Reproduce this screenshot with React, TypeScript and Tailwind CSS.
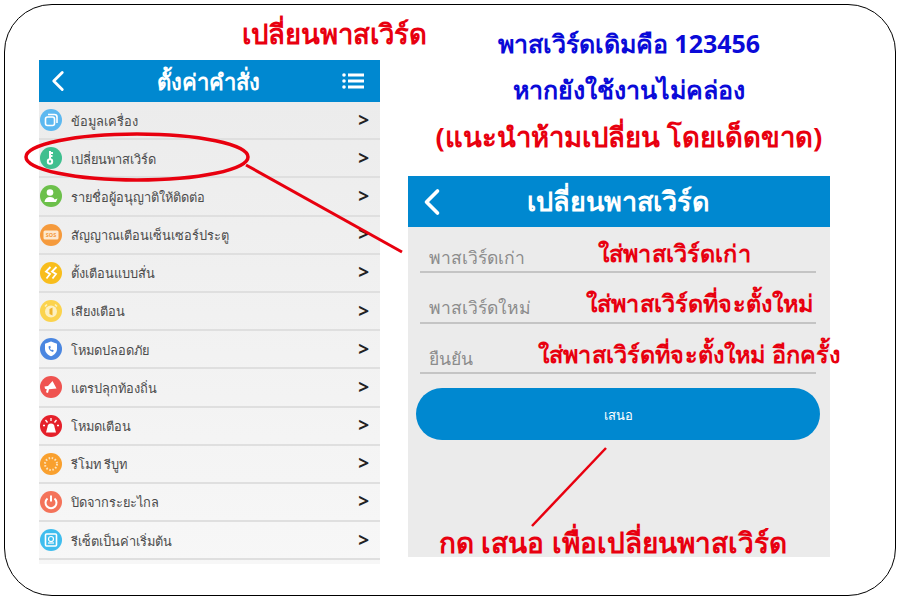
import { ChevronLeft } from 'lucide-react'

const MENU = [
  { label: 'ข้อมูลเครื่อง', color: 'bg-[#5cb8f0]', icon: 'copy' },
  { label: 'เปลี่ยนพาสเวิร์ด', color: 'bg-[#3fbf8f]', icon: 'key' },
  { label: 'รายชื่อผู้อนุญาติให้ติดต่อ', color: 'bg-[#6cc04a]', icon: 'user' },
  { label: 'สัญญาณเตือนเซ็นเซอร์ประตู', color: 'bg-[#f59a3c]', icon: 'sos' },
  { label: 'ตั้งเตือนแบบสั่น', color: 'bg-[#f8bd1c]', icon: 'vibrate' },
  { label: 'เสียงเตือน', color: 'bg-[#fbd34d]', icon: 'sound' },
  { label: 'โหมดปลอดภัย', color: 'bg-[#4a86e0]', icon: 'shield' },
  { label: 'แตรปลุกท้องถิ่น', color: 'bg-[#ef5350]', icon: 'horn' },
  { label: 'โหมดเตือน', color: 'bg-[#e5202a]', icon: 'siren' },
  { label: 'รีโมท รีบูท', color: 'bg-[#f9a02e]', icon: 'dots' },
  { label: 'ปิดจากระยะไกล', color: 'bg-[#f4735a]', icon: 'power' },
  { label: 'รีเซ็ตเป็นค่าเริ่มต้น', color: 'bg-[#3fbdee]', icon: 'reset' },
]

function Glyph({ name }: { name: string }) {
  return (
    <svg viewBox="0 0 22 22" className="h-[22px] w-[22px]" fill="none" stroke="#fff" strokeWidth="1.6">
      {name === 'copy' && <><rect x="5.500" y="8" width="9" height="8.500" rx="2" /><path d="M8 5.500h6.500a2.500 2.500 0 0 1 2.500 2.500v6" /></>}
      {name === 'key' && <><circle cx="10" cy="14.500" r="2.200" strokeWidth="2" /><path d="M10 4v8M10 6h3M10 9h2.500" strokeWidth="2" /></>}
      {name === 'user' && <><circle cx="10" cy="7.500" r="3.300" fill="#fff" stroke="none" /><path d="M4.500 17c.5-3.500 2.500-5 5.500-5s4 1 4.500 2.500l3-1-1.500 3.500z" fill="#fff" stroke="none" /></>}
      {name === 'sos' && <><rect x="3.500" y="6.500" width="15" height="9" rx="1.500" fill="#fde9d0" stroke="none" /><text x="11" y="13" textAnchor="middle" fontSize="5.500" fontWeight="700" fill="#f59a3c" stroke="none">SOS</text></>}
      {name === 'vibrate' && <path d="M10.500 5l-4.500 4.500 4 2.500-3.500 4.500M16.500 5l-4.500 4.500 4 2.500-3.500 4.500" strokeWidth="1.800" />}
      {name === 'sound' && <><circle cx="11" cy="11.500" r="6" fill="#fdf0c0" stroke="none" /><path d="M9.500 9v5l3 1.500v-8z" fill="#f0b429" stroke="none" /><path d="M5 6.500l2-2M17 6.500l-2-2" stroke="#fdf0c0" /></>}
      {name === 'shield' && <><path d="M11 3.500l6 2.200v5c0 3.500-2.500 6-6 7.500-3.500-1.500-6-4-6-7.500v-5z" fill="#fff" stroke="none" /><path d="M8.500 8.500c0 3 2 5 4.500 5.500l.8-1.500-1.800-1-.8.700c-.7-.5-1-1.200-1.200-2l.8-.6-.6-1.800z" fill="#4a86e0" stroke="none" /></>}
      {name === 'horn' && <path d="M12.500 5l4 7.500-7.500.8-1 3.700-2-.8.800-2.900-1.800-.6-.5-2.200 3.500-.6z" fill="#fff" stroke="none" />}
      {name === 'siren' && <><path d="M6 17.500l1.500-5.500a3.500 3.500 0 0 1 7 0l1.500 5.500z" fill="#fff" stroke="none" /><path d="M11 3v3M5.500 5l2 2.500M16.500 5l-2 2.500M3 10.500h2M17 10.500h2" strokeWidth="1.300" /></>}
      {name === 'dots' && <circle cx="11" cy="11" r="6" strokeDasharray="1.500 1.640" strokeWidth="2" stroke="#fde3bd" />}
      {name === 'power' && <><path d="M7.500 7.500a5.500 5.500 0 1 0 7 0" strokeWidth="2" /><path d="M11 4.500v6" strokeWidth="2" /></>}
      {name === 'reset' && <><rect x="5.500" y="5" width="11" height="12" rx="1" /><circle cx="11" cy="10" r="2.500" strokeWidth="1.200" /><path d="M8 14h6" strokeWidth="1.200" /></>}
    </svg>
  )
}

function MenuRow({ label, color, icon }: { label: string; color: string; icon: string }) {
  return (
    <div className="flex h-[38.2px] items-center border-b-2 border-[#dfdfdf] pl-[1px] pr-[11px]">
      <span className={`flex h-[22px] w-[22px] items-center justify-center rounded-full ${color}`}>
        <Glyph name={icon} />
      </span>
      <span className="ml-[9px] flex-1 pt-[2px] text-[12.800px] text-[#4b4b4b]">{label}</span>
      <span className="text-[19px] font-bold leading-none text-[#222]">&gt;</span>
    </div>
  )
}

function Field({ label, hint, hintClass, height }: { label: string; hint: string; hintClass: string; height: string }) {
  return (
    <div className={`relative ml-[12px] mr-[14px] flex items-end border-b-2 border-[#c4c4c4] pb-[1px] pl-[9px] text-[17.500px] text-[#8c8c8c] ${height}`}>
      {label}
      <span className={`absolute bottom-[6px] whitespace-nowrap text-[23.500px] font-bold leading-none tracking-[0.15px] text-[#e8000f] ${hintClass}`}>{hint}</span>
    </div>
  )
}

export default function App() {
  return (
    <div className="h-[600px] w-[900px] overflow-hidden bg-white p-[4px] font-['Noto_Sans','Liberation_Sans',sans-serif]">
      <div className="relative flex h-[592px] w-[892px] rounded-[48px] border border-black pl-[34px] pt-[55px]">
        <h1 className="absolute left-[237px] top-[11px] text-[27.500px] font-bold leading-[36px] text-[#e8000f]">เปลี่ยนพาสเวิร์ด</h1>

        {/* left phone screen */}
        <div className="h-[504px] w-[341px] bg-linear-to-b from-[#ebebeb] to-[#f7f7f7]">
          <div className="flex h-[42px] items-center justify-between bg-[#0088d0] pl-[2px] pr-[16px] text-white">
            <ChevronLeft size={34} strokeWidth={2} />
            <span className="text-[22px] font-bold">ตั้งค่าคำสั่ง</span>
            <svg viewBox="0 0 22 18" className="h-[18px] w-[22px]" fill="#fff">
              <circle cx="2" cy="3" r="1.800" /><circle cx="2" cy="9" r="1.800" /><circle cx="2" cy="15" r="1.800" />
              <rect x="6" y="1.500" width="16" height="3" /><rect x="6" y="7.500" width="16" height="3" /><rect x="6" y="13.500" width="16" height="3" />
            </svg>
          </div>
          {MENU.map(item => <MenuRow key={item.label} {...item} />)}
        </div>

        {/* right column */}
        <div className="ml-[28px] w-[422px]">
          <div className="-mt-[40px] h-[156px] whitespace-nowrap pl-[20px] text-center text-[25px] font-bold leading-[46px]">
            <p className="text-[#0a0ad8]">พาสเวิร์ดเดิมคือ 123456</p>
            <p className="text-[#0a0ad8]">หากยังใช้งานไม่คล่อง</p>
            <p className="text-[27.500px] leading-[50px] text-[#e8000f]">(แนะนำห้ามเปลี่ยน โดยเด็ดขาด)</p>
          </div>
          <div className="relative h-[381px] bg-[#ebebeb]">
            <div className="flex h-[51px] items-center bg-[#0088d0] pl-[2px] text-white">
              <ChevronLeft size={44} strokeWidth={2} />
              <span className="ml-[73px] text-[27px] font-bold">เปลี่ยนพาสเวิร์ด</span>
            </div>
            <Field height="h-[46px]" label="พาสเวิร์ดเก่า" hint="ใส่พาสเวิร์ดเก่า" hintClass="left-[178px]" />
            <Field height="h-[50.500px]" label="พาสเวิร์ดใหม่" hint="ใส่พาสเวิร์ดที่จะตั้งใหม่" hintClass="left-[166px]" />
            <Field height="h-[50.500px]" label="ยืนยัน" hint="ใส่พาสเวิร์ดที่จะตั้งใหม่ อีกครั้ง" hintClass="left-[118px]" />
            <button className="mx-[8px] mt-[14px] block h-[52px] w-[404px] rounded-full bg-[#0088d0] pt-[3px] text-[13px] text-white">เสนอ</button>
            <p className="absolute bottom-[-6px] left-[31px] whitespace-nowrap text-[28px] font-bold text-[#e8000f]">กด เสนอ เพื่อเปลี่ยนพาสเวิร์ด</p>
          </div>
        </div>

        {/* red annotations */}
        <svg className="pointer-events-none absolute left-0 top-0" width="892" height="592" fill="none" stroke="#e8000f" strokeWidth="2.500">
          <ellipse cx="132" cy="152" rx="111" ry="23" strokeWidth="3.500" />
          <path d="M241 160L397 247" strokeWidth="3" />
          <path d="M601 443L527 521" strokeWidth="2.500" />
        </svg>
      </div>
    </div>
  )
}
